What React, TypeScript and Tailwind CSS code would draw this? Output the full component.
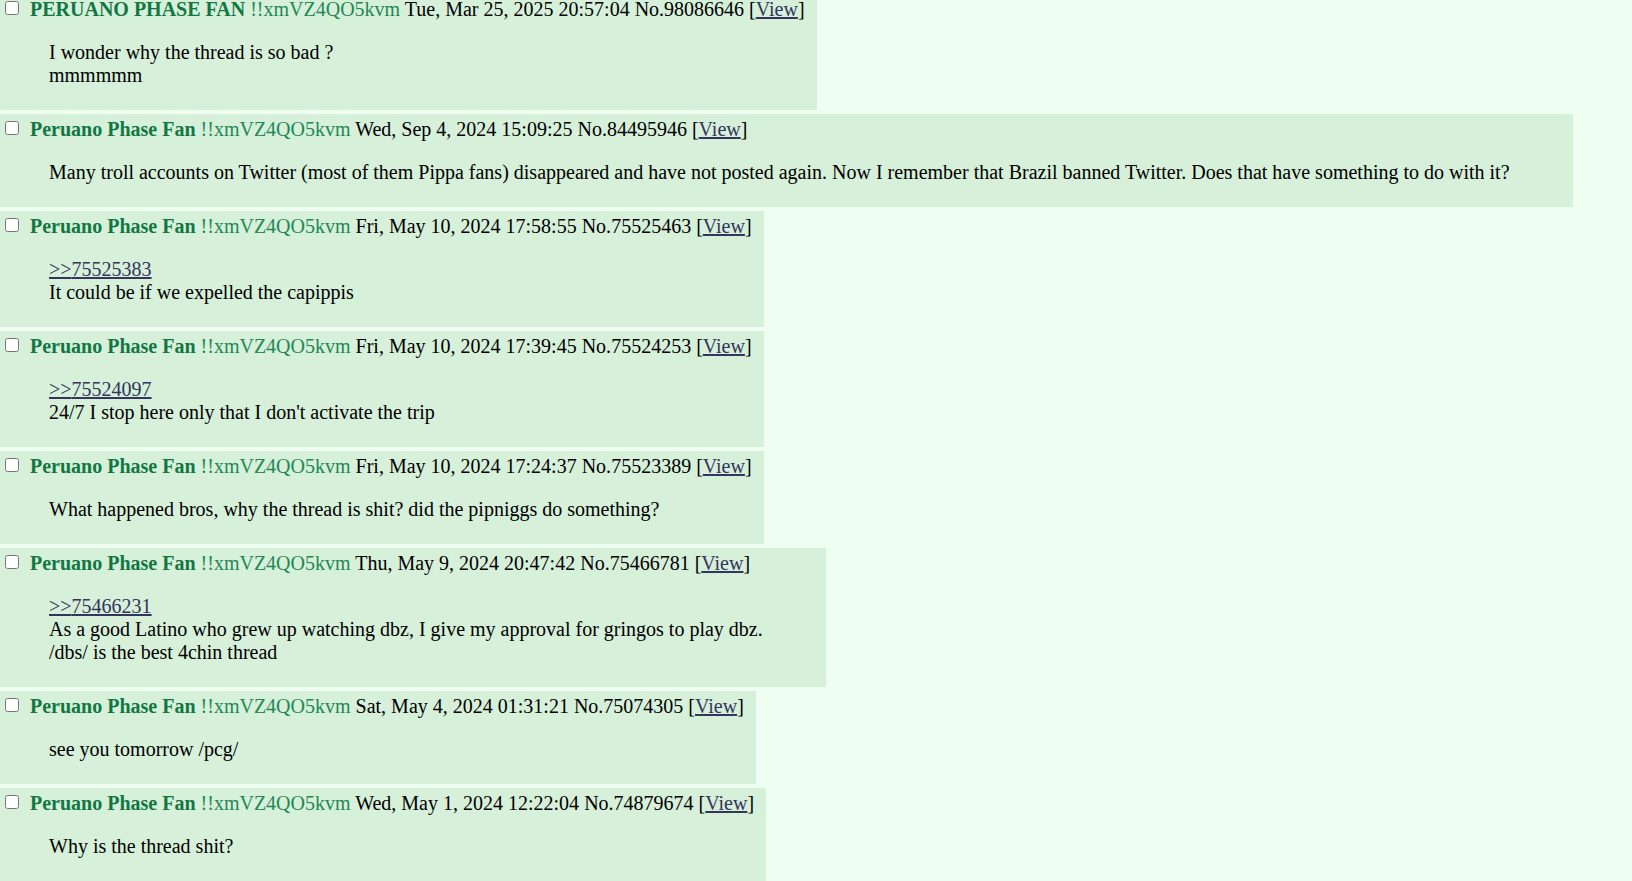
import React from "react";

type Post = {
  name: string;
  date: string;
  no: string;
  quote?: string;
  lines: string[];
};

const posts: Post[] = [
  {
    name: "PERUANO PHASE FAN",
    date: "Tue, Mar 25, 2025 20:57:04",
    no: "98086646",
    lines: ["I wonder why the thread is so bad ?", "mmmmmm"],
  },
  {
    name: "Peruano Phase Fan",
    date: "Wed, Sep 4, 2024 15:09:25",
    no: "84495946",
    lines: [
      "Many troll accounts on Twitter (most of them Pippa fans) disappeared and have not posted again. Now I remember that Brazil banned Twitter. Does that have something to do with it?",
    ],
  },
  {
    name: "Peruano Phase Fan",
    date: "Fri, May 10, 2024 17:58:55",
    no: "75525463",
    quote: "75525383",
    lines: ["It could be if we expelled the capippis"],
  },
  {
    name: "Peruano Phase Fan",
    date: "Fri, May 10, 2024 17:39:45",
    no: "75524253",
    quote: "75524097",
    lines: ["24/7 I stop here only that I don't activate the trip"],
  },
  {
    name: "Peruano Phase Fan",
    date: "Fri, May 10, 2024 17:24:37",
    no: "75523389",
    lines: ["What happened bros, why the thread is shit? did the pipniggs do something?"],
  },
  {
    name: "Peruano Phase Fan",
    date: "Thu, May 9, 2024 20:47:42",
    no: "75466781",
    quote: "75466231",
    lines: [
      "As a good Latino who grew up watching dbz, I give my approval for gringos to play dbz.",
      "/dbs/ is the best 4chin thread",
    ],
  },
  {
    name: "Peruano Phase Fan",
    date: "Sat, May 4, 2024 01:31:21",
    no: "75074305",
    lines: ["see you tomorrow /pcg/"],
  },
  {
    name: "Peruano Phase Fan",
    date: "Wed, May 1, 2024 12:22:04",
    no: "74879674",
    lines: ["Why is the thread shit?"],
  },
];

function PostCard({ post }: { post: Post }) {
  return (
    <div className="bg-[#d6f0da] pt-[4px] pb-[3px]">
      {/* Header */}
      <div className="flex items-center pr-[12px] leading-[23px]">
        <input
          type="checkbox"
          className="ml-[5px] mr-[11px] mb-[4px] h-[14px] w-[14px] shrink-0"
        />
        <span className="whitespace-nowrap">
          <span className="font-bold text-[#117743]">{post.name}</span>{" "}
          <span className="text-[#228854]">!!xmVZ4QO5kvm</span> {post.date} No.{post.no} [
          <a href="#" className="text-[#34345c] underline">
            View
          </a>
          ]
        </span>
      </div>

      {/* Body */}
      <blockquote className="mt-[20px] mb-[20px] ml-[49px] mr-[63px] leading-[23px]">
        {post.quote && (
          <div>
            <a href="#" className="text-[#34345c] underline">
              &gt;&gt;{post.quote}
            </a>
          </div>
        )}
        {post.lines.map((l, i) => (
          <div key={i}>{l}</div>
        ))}
      </blockquote>
    </div>
  );
}

export default function App() {
  return (
    <div
      className="min-h-screen overflow-hidden bg-[#eefff2] text-[20px] text-black"
      style={{ fontFamily: '"Liberation Serif", "Times New Roman", serif' }}
    >
      <div className="-mt-[6px] flex flex-col items-start gap-[4px]">
        {posts.map((p) => (
          <PostCard key={p.no} post={p} />
        ))}
      </div>
    </div>
  );
}
